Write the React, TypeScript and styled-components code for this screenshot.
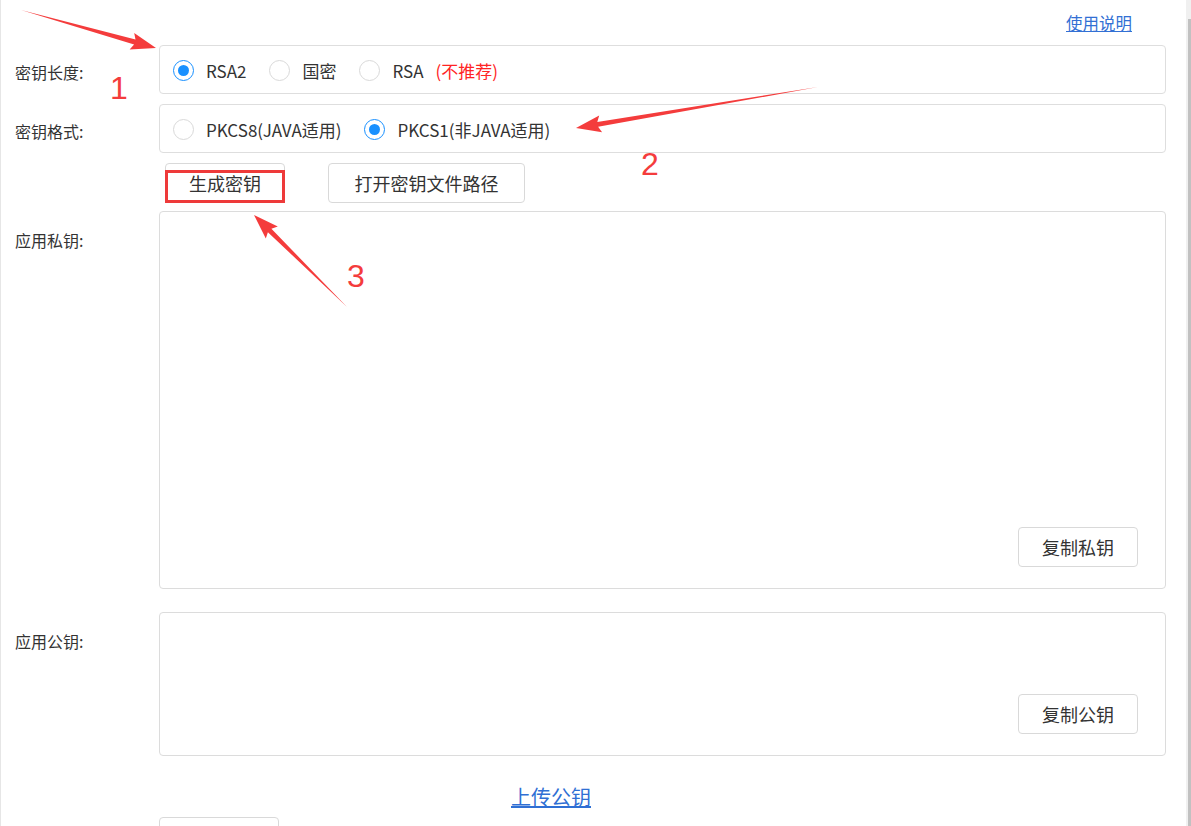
import React from 'react';
import styled, { createGlobalStyle } from 'styled-components';

const GlobalStyle = createGlobalStyle`
  html, body {
    margin: 0;
    padding: 0;
    height: 826px;
    overflow: hidden;
    background: #fff;
  }
  body {
    font-family: "Noto Sans CJK SC", "Noto Sans", sans-serif;
    color: #333;
  }
`;

const Page = styled.div`
  position: relative;
  display: flex;
  width: 1191px;
  height: 826px;
  overflow: hidden;
`;

const Main = styled.div`
  flex: 1;
  border-left: 1px solid #e6e6e6;
  padding: 0 20px 0 14px;
`;

const ScrollTrack = styled.div`
  width: 5px;
  background: #f0f0f0;
  display: flex;
  flex-direction: column;
  padding-top: 19px;
  box-sizing: border-box;
`;

const ScrollThumb = styled.div`
  flex: 1;
  margin-left: 2px;
  background: #c1c1c1;
`;

const TopBar = styled.div`
  height: 45px;
  display: flex;
  justify-content: flex-end;
  align-items: flex-start;
  padding: 12px 34px 0 0;
  box-sizing: border-box;
`;

const HelpLink = styled.a`
  font-size: 16.5px;
  line-height: 22px;
  color: #3270d4;
  text-decoration: underline;
  cursor: pointer;
`;

const FormRow = styled.div<{ $gap?: number }>`
  display: grid;
  grid-template-columns: 144px 1fr;
  margin-bottom: ${({ $gap }) => $gap ?? 0}px;
`;

const Label = styled.div<{ $top?: boolean }>`
  font-size: 16px;
  line-height: 22px;
  color: #333;
  align-self: ${({ $top }) => ($top ? 'start' : 'center')};
  padding-top: ${({ $top }) => ($top ? 18 : 5)}px;
`;

const OptionBox = styled.div`
  height: 49px;
  box-sizing: border-box;
  border: 1px solid #dedede;
  border-radius: 4px;
  display: flex;
  align-items: center;
  padding-left: 13px;
  padding-top: 1px;
`;

const RadioItem = styled.label`
  display: flex;
  align-items: center;
  gap: 12px;
  margin-right: 23px;
  font-size: 17px;
  color: #333;
  cursor: pointer;
`;

const Circle = styled.span<{ $checked?: boolean }>`
  width: 21px;
  height: 21px;
  box-sizing: border-box;
  border-radius: 50%;
  border: 1px solid ${({ $checked }) => ($checked ? '#1890ff' : '#d9d9d9')};
  display: flex;
  align-items: center;
  justify-content: center;
  background: #fff;
  &::after {
    content: '';
    width: 11px;
    height: 11px;
    border-radius: 50%;
    background: ${({ $checked }) => ($checked ? '#1890ff' : 'transparent')};
  }
`;

const Warn = styled.span`
  color: #ff2424;
  margin-left: 12px;
`;

const ButtonRow = styled.div`
  display: flex;
  gap: 43px;
  padding-left: 6px;
`;

const Button = styled.button<{ $w: number }>`
  position: relative;
  width: ${({ $w }) => $w}px;
  height: 40px;
  box-sizing: border-box;
  border: 1px solid #d9d9d9;
  border-radius: 4px;
  background: #fff;
  font-family: inherit;
  font-size: 18px;
  color: #333;
  padding: 0;
  cursor: pointer;
`;

const Highlight = styled.span`
  position: absolute;
  top: 6px;
  left: -1px;
  right: -1px;
  bottom: -1px;
  border: 3px solid #ee3a3a;
  pointer-events: none;
`;

const KeyBox = styled.div<{ $h: number }>`
  height: ${({ $h }) => $h}px;
  box-sizing: border-box;
  border: 1px solid #dcdcdc;
  border-radius: 4px;
  display: flex;
  flex-direction: column;
`;

const KeyText = styled.textarea`
  flex: 1;
  border: none;
  outline: none;
  resize: none;
  background: transparent;
  padding: 10px 12px;
  font-family: inherit;
  font-size: 14px;
`;

const CopyBar = styled.div`
  display: flex;
  justify-content: flex-end;
  padding: 0 27px 21px 0;
`;

const UploadRow = styled.div`
  padding: 30px 0 0 496px;
  height: 61px;
  box-sizing: border-box;
`;

const UploadLink = styled.a`
  font-size: 20px;
  line-height: 22px;
  color: #2f6fd4;
  text-decoration: underline;
  cursor: pointer;
`;

const Overlay = styled.svg`
  position: absolute;
  left: 0;
  top: 0;
  pointer-events: none;
`;

const Mark = styled.div`
  position: absolute;
  font-family: "Liberation Sans", Arial, sans-serif;
  font-size: 32px;
  line-height: 32px;
  color: #f43c3c;
`;

const arrow = (tx: number, ty: number, px: number, py: number) => {
  const dx = px - tx;
  const dy = py - ty;
  const len = Math.hypot(dx, dy);
  const ux = dx / len;
  const uy = dy / len;
  const nx = -uy;
  const ny = ux;
  const head = 22;
  const shaft = 5;
  const wing = 17;
  const bx = px - ux * head;
  const by = py - uy * head;
  const wx = bx - ux * 3;
  const wy = by - uy * 3;
  const pts = [
    [tx, ty],
    [bx + (nx * shaft) / 2, by + (ny * shaft) / 2],
    [wx + (nx * wing) / 2, wy + (ny * wing) / 2],
    [px, py],
    [wx - (nx * wing) / 2, wy - (ny * wing) / 2],
    [bx - (nx * shaft) / 2, by - (ny * shaft) / 2],
  ];
  return pts.map((p) => p.map((v) => v.toFixed(1)).join(',')).join(' ');
};

const Radio: React.FC<{ checked?: boolean; children: React.ReactNode }> = ({ checked, children }) => (
  <RadioItem>
    <Circle $checked={checked} />
    <span>{children}</span>
  </RadioItem>
);

export default function App() {
  return (
    <Page>
      <GlobalStyle />
      <Main>
        <TopBar>
          <HelpLink>使用说明</HelpLink>
        </TopBar>

        <FormRow $gap={10}>
          <Label>密钥长度:</Label>
          <OptionBox>
            <Radio checked>RSA2</Radio>
            <Radio>国密</Radio>
            <Radio>
              RSA<Warn>(不推荐)</Warn>
            </Radio>
          </OptionBox>
        </FormRow>

        <FormRow $gap={10}>
          <Label>密钥格式:</Label>
          <OptionBox>
            <Radio>PKCS8(JAVA适用)</Radio>
            <Radio checked>PKCS1(非JAVA适用)</Radio>
          </OptionBox>
        </FormRow>

        <FormRow $gap={8}>
          <span />
          <ButtonRow>
            <Button $w={120}>
              生成密钥
              <Highlight />
            </Button>
            <Button $w={197}>打开密钥文件路径</Button>
          </ButtonRow>
        </FormRow>

        <FormRow $gap={23}>
          <Label $top>应用私钥:</Label>
          <KeyBox $h={378}>
            <KeyText />
            <CopyBar>
              <Button $w={120}>复制私钥</Button>
            </CopyBar>
          </KeyBox>
        </FormRow>

        <FormRow>
          <Label $top>应用公钥:</Label>
          <KeyBox $h={144}>
            <KeyText />
            <CopyBar>
              <Button $w={120}>复制公钥</Button>
            </CopyBar>
          </KeyBox>
        </FormRow>

        <UploadRow>
          <UploadLink>上传公钥</UploadLink>
        </UploadRow>

        <FormRow>
          <span />
          <Button $w={120} aria-label="保存" />
        </FormRow>
      </Main>
      <ScrollTrack>
        <ScrollThumb />
      </ScrollTrack>

      <Overlay width="1191" height="826">
        <polygon points={arrow(21, 10, 156, 48)} fill="#f43c3c" />
        <polygon points={arrow(818, 87, 576, 128)} fill="#f43c3c" />
        <polygon points={arrow(347, 307, 254, 215)} fill="#f43c3c" />
      </Overlay>
      <Mark style={{ left: 110, top: 72 }}>1</Mark>
      <Mark style={{ left: 641, top: 148 }}>2</Mark>
      <Mark style={{ left: 347, top: 260 }}>3</Mark>
    </Page>
  );
}
